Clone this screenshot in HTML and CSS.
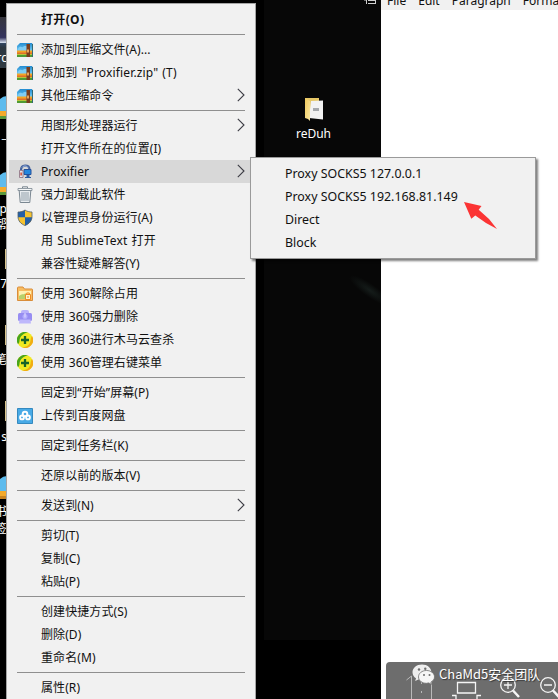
FILE: index.html
```html
<!DOCTYPE html>
<html lang="zh-CN">
<head>
<meta charset="utf-8">
<title>Desktop</title>
<link rel="stylesheet" href="styles.css">
</head>
<body>
<svg class="defs" width="0" height="0">
  <defs>
    <linearGradient id="blue" x1="0" y1="0" x2="0" y2="1"><stop offset="0" stop-color="#238bd0"/><stop offset="1" stop-color="#7ed5fa"/></linearGradient>
    <linearGradient id="gold" x1="0" y1="0" x2="1" y2="1"><stop offset="0" stop-color="#f0c95c"/><stop offset="1" stop-color="#fae7a2"/></linearGradient>
  </defs>
  <symbol id="zip" viewBox="0 0 16 14">
    <path d="M0 3 3 0h12l1 2v7H0z" fill="url(#blue)"/>
    <path d="M1 6c2-4 4-1 5-2 2-2 3 0 4-1v5H1z" fill="#7fcdf4"/>
    <path d="M0 7.500h16V10H0z" fill="#f4a524"/><path d="M0 9.500h16V11H0z" fill="#e0702a"/>
    <path d="M0 11h16v3H0z" fill="#4e9a35"/><path d="M0 11h16v1H0z" fill="#b8c53a"/>
    <path d="M9.500 1h3.500v13H9.500z" fill="#7b3d1c"/><path d="M10 6.500h2v3h-2z" fill="#e9a55b"/>
    <path d="M15 1h1v13h-1z" fill="#326a73"/>
  </symbol>
  <symbol id="prox" viewBox="0 0 16 16">
    <path d="M4 6c0-6 8-5.500 8.500-1" fill="none" stroke="#44619c" stroke-width="2.200"/>
    <path d="M5 3.500c2-2.500 5-1.500 6 0" fill="none" stroke="#a9c3ea" stroke-width="1"/>
    <path d="M7 5.500h7v5H7z" fill="#2387dd" stroke="#26509a"/><path d="M9.500 11h3v2h1.500v1H8v-1h1.500z" fill="#2a5ba0"/>
    <path d="M2.500 6.500h3.500v7H2.500z" fill="#e2e6ee" stroke="#8a6b7c" stroke-width=".8"/><path d="M3.300 8.500h1.700v3H3.300z" fill="#d85d45"/>
  </symbol>
  <symbol id="bin" viewBox="0 0 16 18">
    <path d="M2.200 4.500h11.600l-1 12H3.200z" fill="#e8ecef" stroke="#7a8791"/>
    <path d="M1 2.500h14v2H1z" fill="#f5f7f8" stroke="#7a8791" stroke-width=".8"/><path d="M5.500 2V.8h5V2" fill="none" stroke="#7a8791"/>
    <path d="M5 6v9M7 6v9M9 6v9M11 6v9" stroke="#94a1ab" stroke-width="1"/>
  </symbol>
  <symbol id="shield" viewBox="0 0 16 17">
    <path d="M8 1C6 2.500 3.500 3 1 3v4.500C1 12 4 15 8 16.500 12 15 15 12 15 7.500V3C12.500 3 10 2.500 8 1z" fill="#f6c22f"/>
    <path d="M8 1C6 2.500 3.500 3 1 3v5.200h7zM8 8.200v8.300c4-1.500 6.700-4.500 7-8.300z" fill="#235fa8"/>
    <path d="M8 1C6 2.500 3.500 3 1 3v4.500C1 12 4 15 8 16.500 12 15 15 12 15 7.500V3C12.500 3 10 2.500 8 1z" fill="none" stroke="#4c5d6b" stroke-width=".8"/>
  </symbol>
  <symbol id="lockfolder" viewBox="0 0 16 16">
    <path d="M.5 2q0-1 1-1H6l1.500 2H15q.5 0 .5 1v10.500H.5z" fill="#f8bd62" stroke="#d98d3a"/>
    <path d="M2 5h12v8H2z" fill="#fff1b3"/><path d="M2 10c4-3 6-1 7-3v6H2z" fill="#b7d16b"/>
    <path d="M8.500 8.500h5v5h-5z" fill="#fff2cc" stroke="#ef8b23"/><path d="M9.700 8.500V7h2.600v1.500M11 10v2" fill="none" stroke="#ef8b23"/>
  </symbol>
  <symbol id="shred" viewBox="0 0 16 16">
    <rect x="4" y="1" width="8" height="6" rx="2" fill="#b9b2fa"/><rect x="1" y="4" width="14" height="8" rx="1.500" fill="#978df2"/><path d="M2.500 10.500h11l.5 4H2z" fill="#beb8fb"/>
    <circle cx="8" cy="7.500" r="2.500" fill="#b3adfd"/><path d="M8 4v4.500" stroke="#e4e0ff"/>
  </symbol>
  <symbol id="plus" viewBox="0 0 16 16">
    <circle cx="8" cy="8" r="8" fill="#f0ea22"/>
    <path d="M1 12A8 8 0 0 1 11 .6C7 1 3 4 2.500 8.500c-.1 2-.5 3-1.500 3.500z" fill="#48a51c"/>
    <path d="M15 4A8 8 0 0 1 5 15.400c5 0 8-3 8.500-6.900.3-2 .5-3 1.500-4.500z" fill="#f1ad13"/>
    <path d="M8 4v8M4 8h8" stroke="#176428" stroke-width="2.300"/>
  </symbol>
  <symbol id="pan" viewBox="0 0 16 16">
    <path d="M.5.5h15v15H.5z" fill="#48aae6" stroke="#3489bf"/>
    <g fill="none" stroke="#fff" stroke-width="1.900"><circle cx="8" cy="6" r="2.300"/><circle cx="5" cy="9.400" r="1.900"/><circle cx="11" cy="9.400" r="1.900"/></g>
  </symbol>
  <symbol id="more" viewBox="0 0 8 14"><path d="M.8.8 7 7 .8 13.200" fill="none" stroke="#3c3c44" stroke-width="1.100"/></symbol>
</svg>

<main class="desktop">
  <div class="wallpaper"></div>
  <div class="streak"></div>
  <div class="edge tile"></div>
  <svg class="edge arch a1" viewBox="0 0 7 26"><path d="M0 4Q3 1 7 1v19H0z" fill="#5dbbed"/><path d="M0 16h7v5H0z" fill="#f4aa2b"/><path d="M0 21h7v3H0z" fill="#5b993b"/></svg>
  <svg class="edge arch a2" viewBox="0 0 7 26"><path d="M0 4Q3 1 7 1v19H0z" fill="#5dbbed"/><path d="M0 16h7v5H0z" fill="#f4aa2b"/><path d="M0 21h7v3H0z" fill="#5b993b"/></svg>
  <svg class="edge arch a3" viewBox="0 0 7 26"><path d="M0 4Q3 1 7 1v19H0z" fill="#5dbbed"/><path d="M0 16h7v5H0z" fill="#f4aa2b"/><path d="M0 21h7v3H0z" fill="#c88320"/></svg>
  <div class="edge sliver s1"></div><div class="edge sliver s2"></div><div class="edge sliver s3"></div>
  <span class="edge lbl l1">rc</span><span class="edge lbl l2">_</span><span class="edge lbl l3">ap</span><span class="edge lbl l4">帮</span>
  <span class="edge lbl l5">17</span><span class="edge lbl l6">笔</span><span class="edge lbl l7">s</span><span class="edge lbl l8">书</span><span class="edge lbl l9">签</span>

  <div class="shortcut">
    <svg width="20" height="25" viewBox="0 0 20 25"><path d="M1 1h14v20H1z" fill="#e6c767"/><path d="M7 4l12-.5v19L5 21z" fill="#f2f2f2"/><path d="M1 1l5 3v20l-2-2-3-1z" fill="url(#gold)"/><path d="M9 11h6v3H9z" fill="#a5a8ac"/></svg>
    <span>reDuh</span>
  </div>
  <svg class="corner" width="13" height="5" viewBox="0 0 13 5"><path d="M0 0h3M2.500 0v4M4 3.500h8M11.500 0v4M4 .5h8" fill="none" stroke="#d0d0d0"/></svg>

  <section class="editor">
    <nav class="menubar"><span>File</span><span>Edit</span><span>Paragraph</span><span>Format</span></nav>
  </section>

  <div class="watermark">
    <svg width="172" height="37" viewBox="0 0 172 37">
      <g fill="none" stroke="#b9b9b9"><path d="M20.500 18 25.500 14v23M35.500 20v2M35.500 29v2M45.500 16v21"/></g>
      <g fill="none" stroke="#f5f5f5" stroke-width="1.300"><path d="M71.500 20.500h18v10.500h-18zM66 33.500h4V37M95 33.500h-4V37"/><circle cx="122" cy="23" r="7.300"/><path d="M118 23h8M122 19v8"/><circle cx="162" cy="23" r="7.300"/><path d="M158 23h8"/></g>
      <path d="M127 28.500 133 35M167 28.500l6 6.500" stroke="#f5f5f5" stroke-width="2.500"/>
      <path d="M36 2.500c-5.500 0-9.500 3.500-9.500 7.800 0 2.600 1.400 4.700 3.500 6l-.8 2.700 3.200-1.600c4 1.200 13 .6 13-7.100 0-4.300-4-7.800-9.400-7.800z" fill="#eee"/>
      <path d="M40.500 8.500c-4.700 0-8 3-8 6.400s3.300 6.400 8 6.400l2.200-.4 2.800 1.500-.6-2.300c2.100-1.200 3.600-2.900 3.600-5.200 0-3.500-3.500-6.400-8-6.400z" fill="#f6f6f6" stroke="#6d6d6d" stroke-width=".8"/>
      <g fill="#6d6d6d"><circle cx="33" cy="7.500" r="1.200"/><circle cx="39.300" cy="6.700" r="1.200"/><circle cx="38" cy="13" r="1"/><circle cx="43.500" cy="13" r="1"/></g>
    </svg>
    <span>ChaMd5安全团队</span>
  </div>

  <ul class="menu">
    <li class="item bold"><i></i><span>打开(O)</span></li>
    <li class="sep"></li>
    <li class="item"><i><svg width="16" height="14"><use href="#zip"/></svg></i><span>添加到压缩文件(A)...</span></li>
    <li class="item wide"><i><svg width="16" height="14"><use href="#zip"/></svg></i><span>添加到 "Proxifier.zip" (T)</span></li>
    <li class="item"><i><svg width="16" height="14"><use href="#zip"/></svg></i><span>其他压缩命令</span><svg class="more"><use href="#more"/></svg></li>
    <li class="sep"></li>
    <li class="item"><i></i><span>用图形处理器运行</span><svg class="more"><use href="#more"/></svg></li>
    <li class="item"><i></i><span>打开文件所在的位置(I)</span></li>
    <li class="item active"><i><svg width="16" height="16"><use href="#prox"/></svg></i><span>Proxifier</span><svg class="more"><use href="#more"/></svg></li>
    <li class="item"><i><svg width="16" height="18"><use href="#bin"/></svg></i><span>强力卸载此软件</span></li>
    <li class="item"><i><svg width="16" height="17"><use href="#shield"/></svg></i><span>以管理员身份运行(A)</span></li>
    <li class="item wide"><i></i><span>用 SublimeText 打开</span></li>
    <li class="item"><i></i><span>兼容性疑难解答(Y)</span></li>
    <li class="sep"></li>
    <li class="item"><i><svg width="16" height="16"><use href="#lockfolder"/></svg></i><span>使用 360解除占用</span></li>
    <li class="item"><i><svg width="16" height="16"><use href="#shred"/></svg></i><span>使用 360强力删除</span></li>
    <li class="item"><i><svg width="16" height="16"><use href="#plus"/></svg></i><span>使用 360进行木马云查杀</span></li>
    <li class="item"><i><svg width="16" height="16"><use href="#plus"/></svg></i><span>使用 360管理右键菜单</span></li>
    <li class="sep"></li>
    <li class="item"><i></i><span>固定到“开始”屏幕(P)</span></li>
    <li class="item"><i><svg width="16" height="16"><use href="#pan"/></svg></i><span>上传到百度网盘</span></li>
    <li class="sep"></li>
    <li class="item"><i></i><span>固定到任务栏(K)</span></li>
    <li class="sep"></li>
    <li class="item"><i></i><span>还原以前的版本(V)</span></li>
    <li class="sep"></li>
    <li class="item"><i></i><span>发送到(N)</span><svg class="more"><use href="#more"/></svg></li>
    <li class="sep"></li>
    <li class="item"><i></i><span>剪切(T)</span></li>
    <li class="item"><i></i><span>复制(C)</span></li>
    <li class="item"><i></i><span>粘贴(P)</span></li>
    <li class="sep"></li>
    <li class="item"><i></i><span>创建快捷方式(S)</span></li>
    <li class="item"><i></i><span>删除(D)</span></li>
    <li class="item"><i></i><span>重命名(M)</span></li>
    <li class="sep"></li>
    <li class="item"><i></i><span>属性(R)</span></li>
  </ul>

  <ul class="submenu">
    <li>Proxy SOCKS5 127.0.0.1</li>
    <li>Proxy SOCKS5 192.168.81.149</li>
    <li>Direct</li>
    <li>Block</li>
  </ul>
  <svg class="pointer" width="34" height="29" viewBox="0 0 34 29"><path d="M0 0 17.500 4 14.700 7.700 25 17 33 27 22 21 11.300 13.400 7.300 16.800z" fill="#fb3434"/></svg>
</main>
</body>
</html>
```

FILE: styles.css
```css
* { box-sizing: border-box; }
body {
  margin: 0;
  overflow: hidden;
  background: #000;
  font: 12px/23px "Noto Sans", "Noto Sans CJK SC", sans-serif;
  color: #101010;
}
ul { list-style: none; margin: 0; padding: 0; }
svg { display: block; }
.defs { position: absolute; }
.desktop { position: relative; width: 558px; height: 699px; overflow: hidden; }
.wallpaper { position: absolute; left: 264px; top: 0; width: 117px; height: 640px; background: #070707; }
.streak {
  position: absolute; left: 345px; top: 284px; width: 50px; height: 13px;
  background: radial-gradient(ellipse closest-side, #151c1a, #070707);
  transform: rotate(35deg);
}

/* context menu */
.menu {
  position: absolute; left: 6px; top: 3px; width: 250px; height: 720px;
  padding: 4px 2px;
  border: 1px solid #a5a5a5;
  background: #f1f1f1;
}
.item { display: flex; align-items: center; height: 23px; white-space: nowrap; }
.item i { display: flex; width: 32px; padding-left: 8px; flex: none; }
.item span { flex: 1; letter-spacing: .08px; word-spacing: .5px; }
.item.wide span { letter-spacing: .16px; word-spacing: .7px; }
.item.bold span { font-weight: 700; letter-spacing: .35px; }
.active { background: #d8d8d8; }
.more { width: 8px; height: 14px; margin: -1px 8px 0 0; }
.sep { height: 7px; padding: 3px 8px; }
.sep::before { content: ""; display: block; height: 1px; background: #8f8f8f; }

.submenu {
  position: absolute; left: 250px; top: 157px; width: 286px; height: 102px;
  padding: 4px 0 4px 34px;
  border: 1px solid #9a9a9a;
  background: #f1f1f1;
  box-shadow: 2px 2px 2px rgba(0, 0, 0, .5);
  font-size: 12.400px;
}
.submenu li { height: 23px; }
.pointer { position: absolute; left: 464px; top: 202px; }

/* editor window */
.editor { position: absolute; left: 381px; top: 0; width: 177px; height: 699px; background: #fff; overflow: hidden; }
.menubar {
  display: flex; gap: 12px; height: 10px; padding-left: 6px;
  background: #f1f1f1; line-height: 20px;
}
.menubar span { margin-top: -9px; }
.watermark {
  position: absolute; left: 386px; top: 662px; width: 172px; height: 37px;
  border-top-left-radius: 4px; background: #6d6d6d; overflow: hidden;
}
.watermark span {
  position: absolute; left: 53px; top: 0;
  color: #fff; font: 13px/23px "Noto Sans CJK SC", sans-serif;
  text-shadow: 1px 1px 1px #333; white-space: nowrap;
}

/* desktop icons */
.shortcut {
  position: absolute; left: 283px; top: 97px; width: 61px;
  display: flex; flex-direction: column; align-items: center;
  color: #fff; font-size: 12px;
}
.corner { position: absolute; left: 364px; top: 0; }
.edge { position: absolute; left: 0; width: 7px; overflow: hidden; }
.tile { top: 17px; height: 51px; background: linear-gradient(#35353c 0, #34345e 40%, #d0d8e8 50%, #30435e 52%, #2c3640 60%, #303a42); }
.arch { height: 26px; }
.a1 { top: 95px; }
.a2 { top: 171px; }
.a3 { top: 475px; }
.sliver { left: 5px; width: 2px; height: 20px; background: #d9c48c; }
.s1 { top: 249px; }
.s2 { top: 325px; }
.s3 { top: 401px; }
.lbl { color: #fff; font-size: 12px; line-height: 14px; height: 15px; white-space: nowrap; direction: rtl; }
.l1 { top: 51px; }
.l2 { top: 127px; }
.l3 { top: 202px; }
.l4 { top: 218px; }
.l5 { top: 277px; }
.l6 { top: 353px; }
.l7 { top: 430px; }
.l8 { top: 505px; }
.l9 { top: 522px; }
```
